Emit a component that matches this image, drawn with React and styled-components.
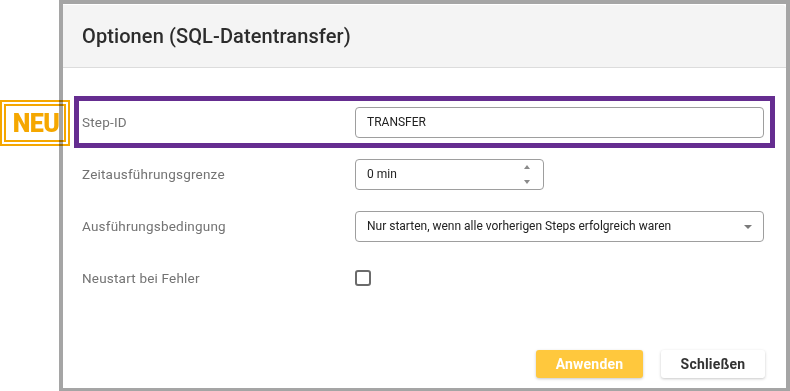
import React from 'react'
import styled, { createGlobalStyle } from 'styled-components'

const GlobalStyle = createGlobalStyle`
  html, body {
    margin: 0;
    padding: 0;
    background: #ffffff;
    font-family: Roboto, "Liberation Sans", sans-serif;
  }
`

const Stage = styled.div`
  position: relative;
  width: 790px;
  height: 391px;
  overflow: hidden;
`

const Frame = styled.div`
  margin-left: 59px;
  width: 731px;
  height: 391px;
  box-sizing: border-box;
  border: 4px solid #a5a5a5;
  border-bottom-width: 3px;
  background: #ffffff;
`

const Dialog = styled.div`
  display: flex;
  flex-direction: column;
  height: 100%;
`

const Header = styled.div`
  height: 63px;
  box-sizing: border-box;
  background: #f4f4f4;
  border-bottom: 1px solid #dcdcdc;
  border-top-right-radius: 4px;
  display: flex;
  align-items: center;
  padding-left: 19px;
  margin: 1px 0 0 0;
`

const Title = styled.h2`
  margin: 0;
  font-size: 20px;
  font-weight: 500;
  color: #2c2c2c;
  letter-spacing: 0.1px;
`

const Form = styled.div`
  padding: 28px 11px 0 11px;
  display: flex;
  flex-direction: column;
`

const Row = styled.div`
  height: 52px;
  box-sizing: border-box;
  border: 5px solid ${p => (p.$highlight ? '#652d90' : 'transparent')};
  padding: 0 6px 0 3px;
  display: grid;
  grid-template-columns: 273px 1fr;
  align-items: center;
`

const Label = styled.span`
  font-size: 13.5px;
  color: #737373;
  letter-spacing: 0.2px;
`

const Field = styled.div`
  position: relative;
  height: 31px;
  box-sizing: border-box;
  border: 1px solid #9e9e9e;
  border-radius: 4px;
  display: flex;
  align-items: center;
  padding: 0 11px;
  font-size: 12px;
  color: #222;
  width: ${p => p.$width || 'auto'};
`

const Spin = styled.div`
  position: absolute;
  right: 13px;
  top: 5px;
  bottom: 5px;
  display: flex;
  flex-direction: column;
  justify-content: space-between;
`

const Tri = styled.span`
  width: 0;
  height: 0;
  border-left: 3.5px solid transparent;
  border-right: 3.5px solid transparent;
  ${p => (p.$up ? 'border-bottom: 4px solid #8a8a8a;' : 'border-top: 4px solid #8a8a8a;')}
`

const Caret = styled.span`
  position: absolute;
  right: 11px;
  top: 13px;
  width: 0;
  height: 0;
  border-left: 4px solid transparent;
  border-right: 4px solid transparent;
  border-top: 4px solid #7a7a7a;
`

const Check = styled.span`
  width: 16px;
  height: 16px;
  box-sizing: border-box;
  border: 2px solid #6b6b6b;
  border-radius: 3px;
`

const Footer = styled.div`
  margin-top: auto;
  padding: 0 21px 10px 0;
  display: flex;
  justify-content: flex-end;
  gap: 18px;
`

const Button = styled.button`
  height: 28px;
  width: ${p => p.$width};
  border: none;
  border-radius: 3px;
  font-family: Roboto, "Liberation Sans", sans-serif;
  font-size: 14px;
  font-weight: 700;
  letter-spacing: 0.2px;
  cursor: pointer;
  background: ${p => (p.$primary ? '#ffc83d' : '#ffffff')};
  color: ${p => (p.$primary ? '#ffffff' : '#333333')};
  box-shadow: 0 1px 3px rgba(0, 0, 0, 0.22);
`

const Badge = styled.div`
  position: absolute;
  left: 0;
  top: 100px;
  width: 70px;
  height: 46px;
  box-sizing: border-box;
  border: 2px solid #f5a700;
  padding: 2px;
  mix-blend-mode: multiply;
`

const BadgeInner = styled.div`
  height: 100%;
  box-sizing: border-box;
  border: 2px solid #f5a700;
  display: flex;
  align-items: center;
  justify-content: center;
  color: #f5a700;
  font-size: 25px;
  font-weight: 900;
  letter-spacing: -0.5px;
  padding-left: 2px;
`

export default function App() {
  return (
    <Stage>
      <GlobalStyle />
      <Frame>
        <Dialog>
          <Header>
            <Title>Optionen (SQL-Datentransfer)</Title>
          </Header>
          <Form>
            <Row $highlight>
              <Label>Step-ID</Label>
              <Field>TRANSFER</Field>
            </Row>
            <Row>
              <Label>Zeitausführungsgrenze</Label>
              <Field $width="189px">
                0 min
                <Spin>
                  <Tri $up />
                  <Tri />
                </Spin>
              </Field>
            </Row>
            <Row>
              <Label>Ausführungsbedingung</Label>
              <Field>
                Nur starten, wenn alle vorherigen Steps erfolgreich waren
                <Caret />
              </Field>
            </Row>
            <Row>
              <Label>Neustart bei Fehler</Label>
              <Check />
            </Row>
          </Form>
          <Footer>
            <Button $primary $width="107px">Anwenden</Button>
            <Button $width="104px">Schließen</Button>
          </Footer>
        </Dialog>
      </Frame>
      <Badge>
        <BadgeInner>NEU</BadgeInner>
      </Badge>
    </Stage>
  )
}
